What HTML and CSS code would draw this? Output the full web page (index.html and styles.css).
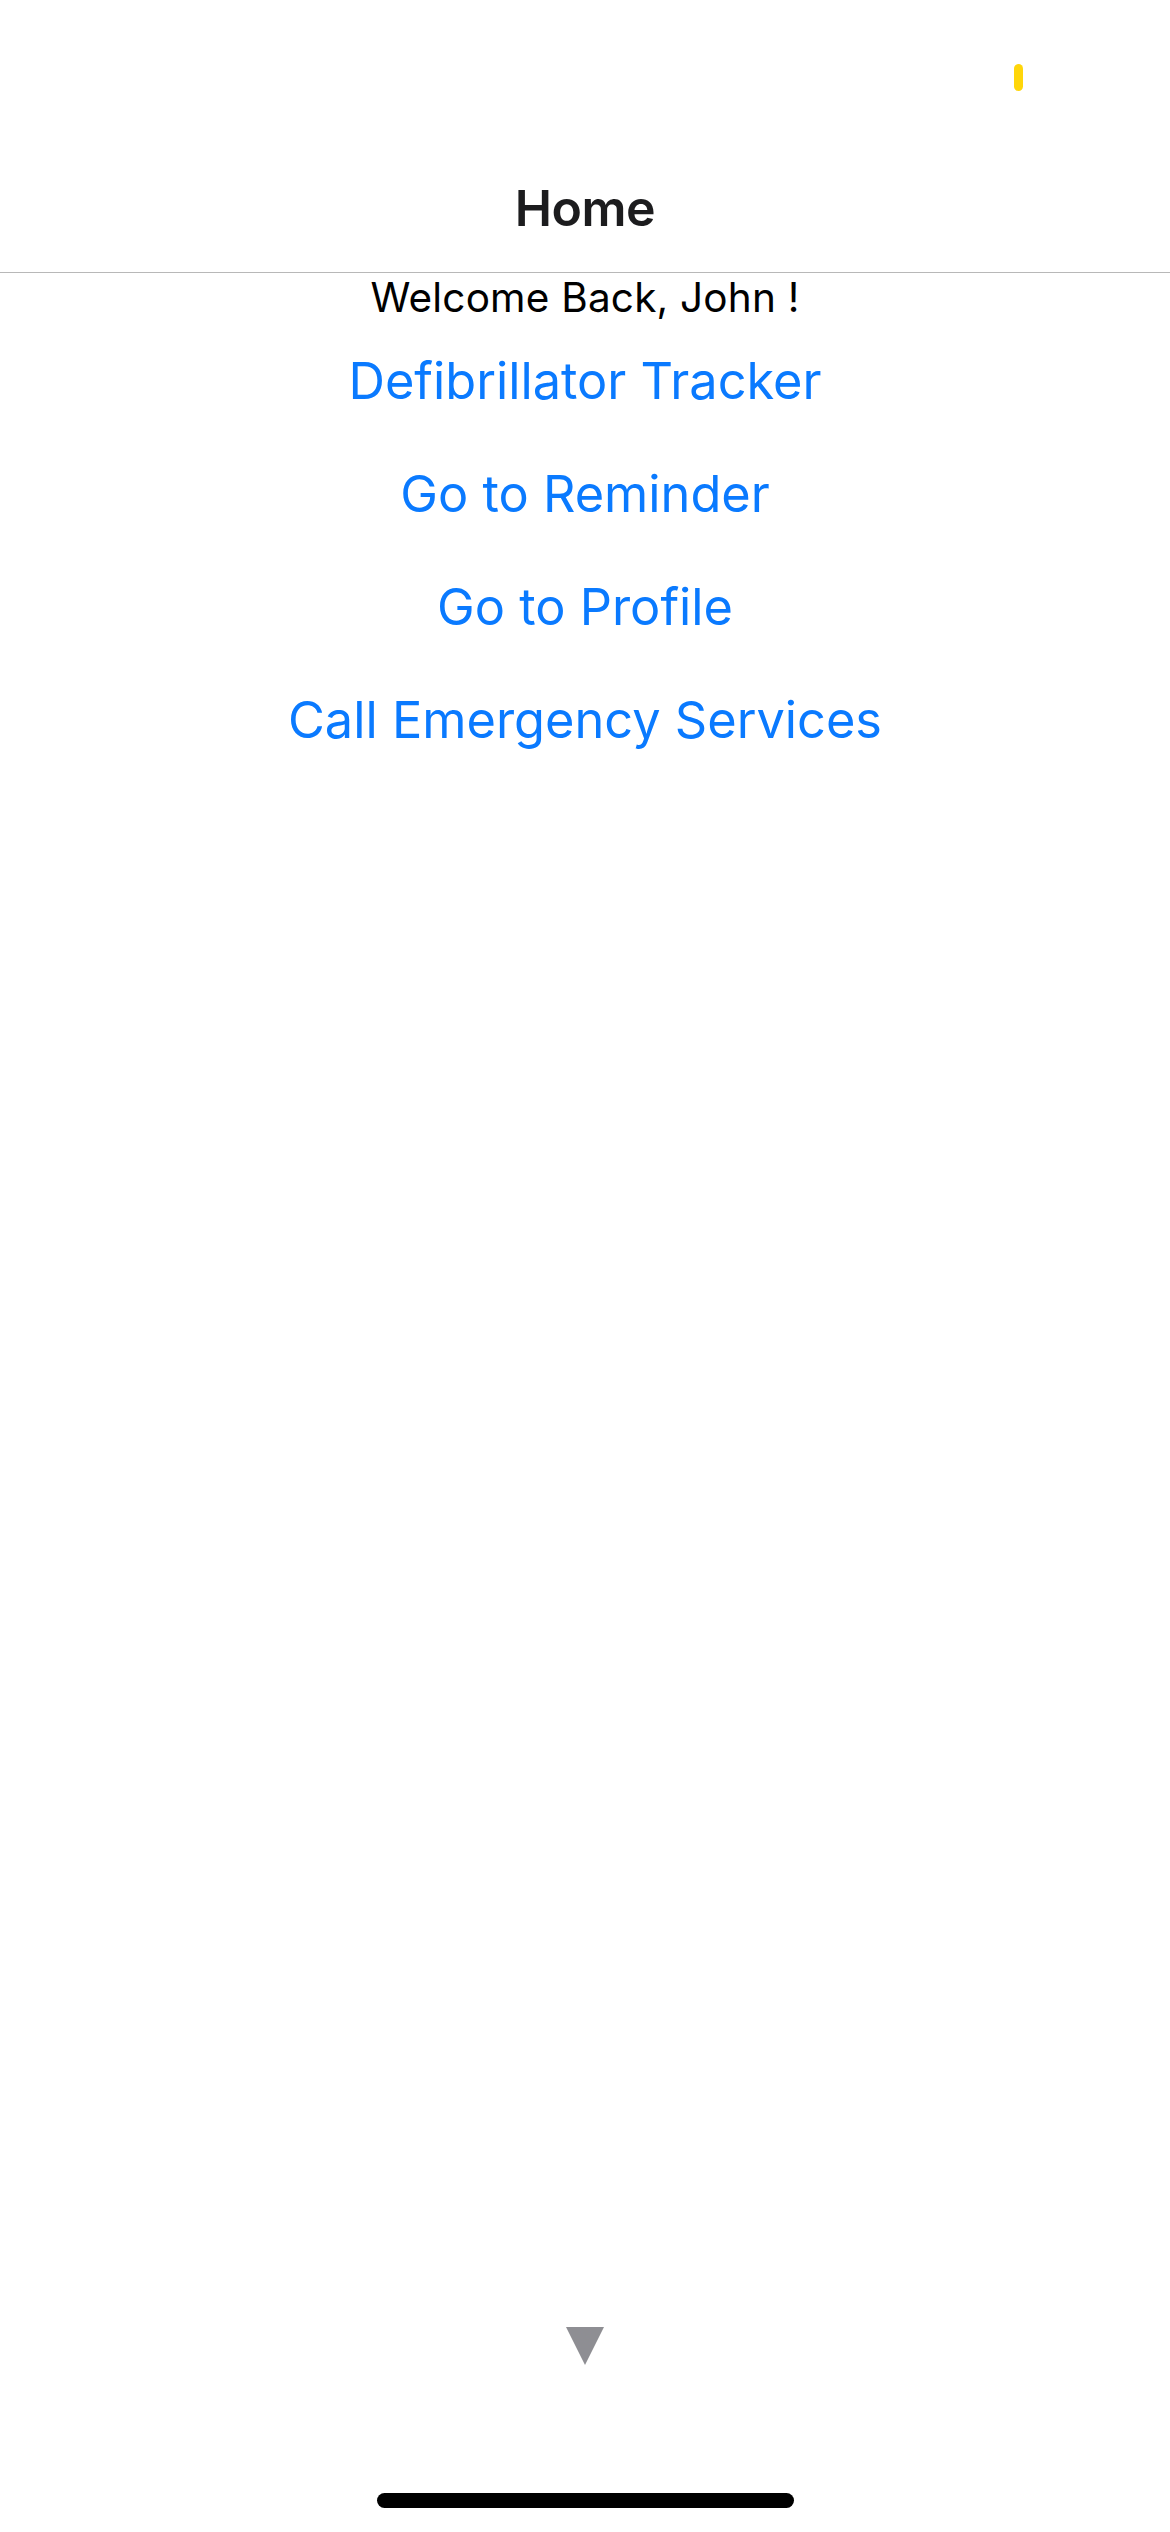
FILE: index.html
```html
<!DOCTYPE html>
<html lang="en">
<head>
<meta charset="utf-8">
<title>Home</title>
<link rel="stylesheet" href="styles.css">
</head>
<body>
<div class="screen">
  <div class="status-bar">
    <span class="indicator-dot"></span>
  </div>
  <header class="nav-bar">
    <h1 class="nav-title">Home</h1>
  </header>
  <main class="content">
    <p class="welcome">Welcome Back, John !</p>
    <nav class="links">
      <a class="link" href="#">Defibrillator Tracker</a>
      <a class="link" href="#">Go to Reminder</a>
      <a class="link" href="#">Go to Profile</a>
      <a class="link" href="#">Call Emergency Services</a>
    </nav>
  </main>
  <footer class="footer">
    <span class="triangle"></span>
    <span class="home-indicator"></span>
  </footer>
</div>
</body>
</html>
```
FILE: styles.css
```css
html, body {
  margin: 0;
  padding: 0;
  background: #ffffff;
}

.screen {
  width: 1170px;
  height: 2532px;
  display: flex;
  flex-direction: column;
  font-family: Inter, "Liberation Sans", sans-serif;
  background: #ffffff;
}

.status-bar {
  height: 141px;
  box-sizing: border-box;
  display: flex;
  justify-content: flex-end;
  align-items: flex-start;
  padding: 64px 147px 0 0;
}

.indicator-dot {
  width: 9px;
  height: 27px;
  border-radius: 5px;
  background: #ffd60a;
}

.nav-bar {
  height: 132px;
  box-sizing: border-box;
  border-bottom: 1px solid #b8b8b8;
  display: flex;
  align-items: center;
  justify-content: center;
  padding-top: 2px;
}

.nav-title {
  margin: 0;
  font-size: 50px;
  font-weight: 600;
  color: #1c1c1e;
  letter-spacing: -0.5px;
}

.content {
  flex: 1;
  display: flex;
  flex-direction: column;
  align-items: center;
}

.welcome {
  margin: 0;
  height: 50px;
  line-height: 50px;
  font-size: 40.5px;
  letter-spacing: 0.2px;
  color: #000000;
}

.links {
  display: flex;
  flex-direction: column;
  align-items: center;
  gap: 41px;
  padding-top: 22px;
}

.link {
  display: block;
  line-height: 72px;
  height: 72px;
  font-size: 50.5px;
  color: #0a7aff;
  text-decoration: none;
}

.footer {
  display: flex;
  flex-direction: column;
  align-items: center;
  padding-bottom: 24px;
}

.triangle {
  width: 0;
  height: 0;
  border-left: 19px solid transparent;
  border-right: 19px solid transparent;
  border-top: 38px solid #8e8e93;
  margin-bottom: 128px;
}

.home-indicator {
  width: 417px;
  height: 15px;
  border-radius: 8px;
  background: #000000;
}
```
